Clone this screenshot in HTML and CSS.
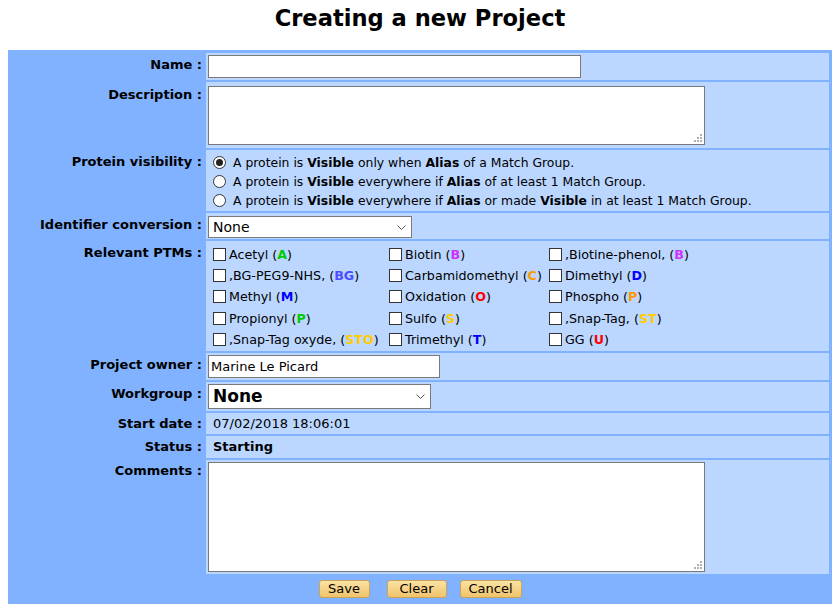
FILE: index.html
```html
<!DOCTYPE html>
<html lang="en">
<head>
<meta charset="utf-8">
<title>Creating a new Project</title>
<link rel="stylesheet" href="styles.css">
</head>
<body>
<h1 class="title">Creating a new Project</h1>
<form class="form">
  <div class="lbl">Name :</div>
  <div class="val"><input class="txt name-input" type="text"></div>

  <div class="lbl lbl-desc">Description :</div>
  <div class="val val-desc">
    <div class="ta-wrap">
      <textarea class="ta ta-desc"></textarea>
      <svg class="grip" width="8" height="8" viewBox="0 0 8 8"><rect x="6" y="0" width="2" height="2"/><rect x="3" y="3" width="2" height="2"/><rect x="6" y="3" width="2" height="2"/><rect x="0" y="6" width="2" height="2"/><rect x="3" y="6" width="2" height="2"/><rect x="6" y="6" width="2" height="2"/></svg>
    </div>
  </div>

  <div class="lbl">Protein visibility :</div>
  <div class="val val-radios">
    <label class="radio-row"><input class="rad" type="radio" name="vis" checked><span>A protein is <b>Visible</b> only when <b>Alias</b> of a Match Group.</span></label>
    <label class="radio-row"><input class="rad" type="radio" name="vis"><span>A protein is <b>Visible</b> everywhere if <b>Alias</b> of at least 1 Match Group.</span></label>
    <label class="radio-row"><input class="rad" type="radio" name="vis"><span>A protein is <b>Visible</b> everywhere if <b>Alias</b> or made <b>Visible</b> in at least 1 Match Group.</span></label>
  </div>

  <div class="lbl">Identifier conversion :</div>
  <div class="val val-ident">
    <div class="sel-wrap sel-ident">
      <select class="sel"><option>None</option></select>
      <svg class="chev" width="9" height="6" viewBox="0 0 9 6"><path d="M0.5 0.5 L4.5 4.5 L8.5 0.5" fill="none" stroke="#555" stroke-width="1"/></svg>
    </div>
  </div>

  <div class="lbl">Relevant PTMs :</div>
  <div class="val val-ptm">
    <label class="ptm"><input class="chk" type="checkbox"><span>Acetyl (<b class="c-green">A</b>)</span></label>
    <label class="ptm"><input class="chk" type="checkbox"><span>Biotin (<b class="c-purple">B</b>)</span></label>
    <label class="ptm"><input class="chk" type="checkbox"><span>,Biotine-phenol, (<b class="c-purple">B</b>)</span></label>

    <label class="ptm"><input class="chk" type="checkbox"><span>,BG-PEG9-NHS, (<b class="c-violet">BG</b>)</span></label>
    <label class="ptm"><input class="chk" type="checkbox"><span>Carbamidomethyl (<b class="c-orange">C</b>)</span></label>
    <label class="ptm"><input class="chk" type="checkbox"><span>Dimethyl (<b class="c-blue">D</b>)</span></label>

    <label class="ptm"><input class="chk" type="checkbox"><span>Methyl (<b class="c-blue">M</b>)</span></label>
    <label class="ptm"><input class="chk" type="checkbox"><span>Oxidation (<b class="c-red">O</b>)</span></label>
    <label class="ptm"><input class="chk" type="checkbox"><span>Phospho (<b class="c-orange">P</b>)</span></label>

    <label class="ptm"><input class="chk" type="checkbox"><span>Propionyl (<b class="c-green">P</b>)</span></label>
    <label class="ptm"><input class="chk" type="checkbox"><span>Sulfo (<b class="c-yellow">S</b>)</span></label>
    <label class="ptm"><input class="chk" type="checkbox"><span>,Snap-Tag, (<b class="c-yellow">ST</b>)</span></label>

    <label class="ptm"><input class="chk" type="checkbox"><span>,Snap-Tag oxyde, (<b class="c-yellow">STO</b>)</span></label>
    <label class="ptm"><input class="chk" type="checkbox"><span>Trimethyl (<b class="c-blue">T</b>)</span></label>
    <label class="ptm"><input class="chk" type="checkbox"><span>GG (<b class="c-red">U</b>)</span></label>
  </div>

  <div class="lbl">Project owner :</div>
  <div class="val"><input class="txt owner-input" type="text" value="Marine Le Picard"></div>

  <div class="lbl">Workgroup :</div>
  <div class="val">
    <div class="sel-wrap sel-group">
      <select class="sel sel-big"><option>None</option></select>
      <svg class="chev" width="9" height="6" viewBox="0 0 9 6"><path d="M0.5 0.5 L4.5 4.5 L8.5 0.5" fill="none" stroke="#555" stroke-width="1"/></svg>
    </div>
  </div>

  <div class="lbl lbl-short">Start date :</div>
  <div class="val val-text">07/02/2018 18:06:01</div>

  <div class="lbl lbl-short">Status :</div>
  <div class="val val-text val-status"><b>Starting</b></div>

  <div class="lbl lbl-short">Comments :</div>
  <div class="val">
    <div class="ta-wrap">
      <textarea class="ta ta-comments"></textarea>
      <svg class="grip" width="8" height="8" viewBox="0 0 8 8"><rect x="6" y="0" width="2" height="2"/><rect x="3" y="3" width="2" height="2"/><rect x="6" y="3" width="2" height="2"/><rect x="0" y="6" width="2" height="2"/><rect x="3" y="6" width="2" height="2"/><rect x="6" y="6" width="2" height="2"/></svg>
    </div>
  </div>

  <div class="buttons">
    <button type="button" class="btn btn-save">Save</button>
    <button type="button" class="btn btn-clear">Clear</button>
    <button type="button" class="btn btn-cancel">Cancel</button>
  </div>
</form>
</body>
</html>
```

FILE: styles.css
```css
html, body {
  margin: 0;
  padding: 0;
  background: #ffffff;
}
body {
  padding: 0 7px 0 8px;
  font-family: "DejaVu Sans", Verdana, sans-serif;
  font-size: 13px;
  color: #000;
}
.title {
  margin: 0;
  height: 50px;
  padding-top: 1px;
  box-sizing: border-box;
  line-height: 34px;
  font-size: 22.6px;
  font-weight: bold;
  text-align: center;
}
.form {
  display: grid;
  grid-template-columns: 192px 1fr;
  column-gap: 3px;
  row-gap: 2px;
  padding: 3px;
  background: #80b2ff;
  margin: 0;
}
.lbl {
  text-align: right;
  font-weight: bold;
  padding: 4px 1px 0 0;
  line-height: 15px;
  white-space: nowrap;
}
.lbl-short {
  padding-top: 3px;
}
.lbl-desc {
  padding-top: 5px;
}
.val {
  background: #bbd7ff;
  padding: 2px;
  line-height: 15px;
}
.txt {
  display: block;
  box-sizing: border-box;
  height: 23px;
  border: 1px solid #7a7a7a;
  background: #fff;
  margin: 0;
  padding: 1px 2px;
  font-family: "DejaVu Sans", Verdana, sans-serif;
  font-size: 13px;
  outline: none;
}
.name-input { width: 373px; }
.owner-input { width: 232px; }

.val-desc { padding: 4px 2px 3px; }
.ta-wrap {
  position: relative;
  width: 497px;
}
.ta {
  display: block;
  box-sizing: border-box;
  width: 497px;
  margin: 0;
  border: 1px solid #7a7a7a;
  background: #fff;
  resize: none;
  font-family: "DejaVu Sans", Verdana, sans-serif;
  font-size: 13px;
  outline: none;
}
.ta-desc { height: 59px; }
.ta-comments { height: 110px; }
.grip {
  position: absolute;
  right: 3px;
  bottom: 3px;
  fill: #b0b0b0;
}

.val-radios {
  padding: 3px 2px 1px;
  font-size: 12.4px;
}
.radio-row {
  display: flex;
  align-items: center;
  height: 19px;
  white-space: nowrap;
}
.rad {
  appearance: none;
  -webkit-appearance: none;
  width: 13px;
  height: 13px;
  margin: 0 7px 0 5px;
  border: 1px solid #333;
  border-radius: 50%;
  background: #fff;
  box-sizing: border-box;
  flex: none;
  position: relative;
}
.rad:checked::after {
  content: "";
  position: absolute;
  left: 2px;
  top: 2px;
  width: 7px;
  height: 7px;
  border-radius: 50%;
  background: #222;
}

.val-ident {
  padding: 3px 2px 1px;
}
.sel-wrap {
  position: relative;
  display: inline-block;
  vertical-align: top;
}
.sel {
  appearance: none;
  -webkit-appearance: none;
  display: block;
  box-sizing: border-box;
  margin: 0;
  border: 1px solid #7a7a7a;
  background: #fff;
  color: #000;
  padding: 0 20px 0 4px;
  font-family: "DejaVu Sans", Verdana, sans-serif;
  outline: none;
  border-radius: 0;
}
.sel-ident .sel {
  width: 204px;
  height: 22px;
  font-size: 14px;
}
.sel-group .sel {
  width: 223px;
  height: 25px;
  font-size: 17px;
  font-weight: bold;
}
.chev {
  position: absolute;
  right: 6px;
  top: 50%;
  margin-top: -2px;
}

.val-ptm {
  display: grid;
  grid-template-columns: 176px 160px 1fr;
  grid-auto-rows: 21.2px;
  padding: 3px 2px 1px 7px;
  font-size: 12.7px;
}
.ptm {
  display: flex;
  align-items: center;
  white-space: nowrap;
}
.chk {
  appearance: none;
  -webkit-appearance: none;
  width: 13px;
  height: 13px;
  margin: 0 3px 0 0;
  border: 1px solid #333;
  background: #fff;
  box-sizing: border-box;
  flex: none;
}
.c-green { color: #00cc00; }
.c-purple { color: #cc33ff; }
.c-violet { color: #4d4dff; }
.c-blue { color: #0000ff; }
.c-orange { color: #ff9900; }
.c-red { color: #ff0000; }
.c-yellow { color: #ffcc00; }

.val-text {
  padding: 3px 2px 3px 7px;
}
.val-status {
  padding-bottom: 4px;
}

.buttons {
  grid-column: 1 / -1;
  display: flex;
  justify-content: center;
  align-items: flex-start;
  height: 25px;
  padding-top: 4px;
  box-sizing: border-box;
}
.btn {
  box-sizing: border-box;
  height: 18px;
  padding: 0;
  margin: 0;
  border: 1px solid #c9a35a;
  border-radius: 3px;
  background: linear-gradient(#fbe3a4, #f0c36a);
  font-family: "DejaVu Sans", Verdana, sans-serif;
  font-size: 13px;
  line-height: 16px;
  color: #000;
}
.btn-save { width: 51px; }
.btn-clear { width: 60px; margin-left: 17px; }
.btn-cancel { width: 62px; margin-left: 13px; }
```
